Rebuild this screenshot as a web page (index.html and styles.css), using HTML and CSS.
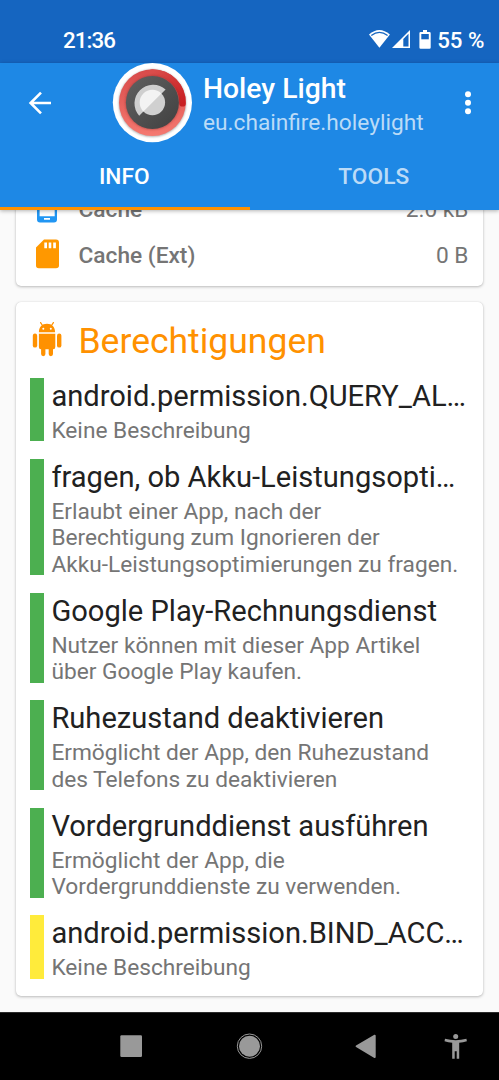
FILE: index.html
```html
<!DOCTYPE html>
<html lang="de">
<head>
<meta charset="utf-8">
<title>Holey Light</title>
<link rel="stylesheet" href="styles.css">
</head>
<body>
<div class="status">
  <span class="clock">21:36</span>
  <svg class="status-icons" width="64" height="22" viewBox="367 28 64 22">
    <path d="M368 34.6Q378.300 25.600 388.900 34.600L378.400 47.800Z" fill="#fff"/>
    <path d="M370.300 35.600Q378.400 29.300 386.600 35.600" fill="none" stroke="#1565c0" stroke-width="1.300"/>
    <path d="M391 48L409 30V48Z" fill="#fff"/>
    <path d="M402.300 38.900L407.500 33.700V46.500H402.300Z" fill="#1565c0"/>
    <path d="M422 30H426V32H428.500Q429.700 32 429.700 33.200V47.500Q429.700 48.700 428.500 48.700H419.600Q418.400 48.700 418.400 47.500V33.200Q418.400 32 419.600 32H422Z" fill="#fff"/>
    <path d="M420.300 34H427.800V39.300H420.300Z" fill="#1565c0"/>
  </svg>
  <span class="battery">55 %</span>
</div>
<header class="header">
  <div class="toolbar">
    <svg class="back" width="24" height="24" viewBox="0 0 24 24" fill="none" stroke="#fff" stroke-width="2.600"><path d="M23 12H2.500M13 1.600L2.600 12L13 22.400"/></svg>
    <svg class="logo" width="80" height="80" viewBox="0 0 80 80">
      <defs>
        <linearGradient id="ring" x1="0" y1="0" x2="0" y2="1"><stop offset="0" stop-color="#d84a4a"/><stop offset="1" stop-color="#f57970"/></linearGradient>
        <linearGradient id="arc" x1="0" y1="0" x2="1" y2="1"><stop offset="0" stop-color="#da4d4b"/><stop offset="1" stop-color="#c91f22"/></linearGradient>
        <linearGradient id="disc" x1="0" y1="0" x2="1" y2="1"><stop offset="0" stop-color="#616161"/><stop offset="1" stop-color="#404040"/></linearGradient>
        <filter id="soft" x="-20%" y="-20%" width="140%" height="140%"><feGaussianBlur stdDeviation="1"/></filter>
      </defs>
      <g transform="translate(.4 -.4)">
        <circle cx="40" cy="40" r="39.600" fill="#fff"/>
        <circle cx="40" cy="40.600" r="33.600" fill="#777" opacity=".65" filter="url(#soft)"/>
        <circle cx="40" cy="40" r="33.400" fill="url(#ring)"/>
        <path d="M40 9.900A30.100 30.100 0 0 1 70.100 40.700" fill="none" stroke="url(#arc)" stroke-width="6.600" stroke-linecap="round"/>
        <circle cx="40" cy="40" r="27" fill="#802d2d" opacity=".5" filter="url(#soft)"/>
        <circle cx="40" cy="40" r="26.500" fill="url(#disc)"/>
        <path d="M26.800 53.200A18.700 18.700 0 0 1 53.200 26.800Z" fill="#cfcfcf"/>
        <circle cx="40" cy="40" r="12.700" fill="#d0d0d0"/>
        <path d="M31 49A12.700 12.700 0 0 1 49 31Z" fill="#f3f3f3"/>
      </g>
    </svg>
    <div class="app">
      <div class="app-name">Holey Light</div>
      <div class="app-id">eu.chainfire.holeylight</div>
    </div>
    <svg class="more" width="8" height="26" viewBox="0 0 8 26" fill="#fff"><circle cx="4" cy="4.200" r="3"/><circle cx="4" cy="12.700" r="3"/><circle cx="4" cy="21.200" r="3"/></svg>
  </div>
  <nav class="tabs"><div class="tab active">INFO</div><div class="tab">TOOLS</div></nav>
</header>
<main class="content">
  <section class="card storage">
    <div class="row">
      <svg class="row-icon" width="32" height="32" viewBox="0 0 32 32"><path fill="#2196f3" fill-rule="evenodd" d="M9 0H23Q26 0 26 3V27.500Q26 30.500 23 30.500H9Q6 30.500 6 27.500V3Q6 0 9 0ZM8.600 4V24.300H23.700V4ZM13 26.100V27.700H19V26.100Z"/></svg>
      <span class="label">Cache</span><span class="value">2.0 kB</span>
    </div>
    <div class="row">
      <svg class="row-icon" width="32" height="32" viewBox="0 0 32 32"><path fill="#ff9800" fill-rule="evenodd" d="M13 1.500H25Q28 1.500 28 4.500V27.500Q28 30.300 25 30.300H7.800Q5 30.300 5 27.500V9.500ZM13.300 4.600V10.300H16V4.600ZM17.700 4.600V10.300H20.300V4.600ZM22.200 4.600V10.300H24.900V4.600Z"/></svg>
      <span class="label">Cache (Ext)</span><span class="value">0 B</span>
    </div>
  </section>
  <section class="card permissions">
    <div class="heading">
      <svg width="30" height="36" viewBox="32 321 30 36" fill="#ff9100">
        <path d="M40.600 322.600L42.500 325.500M53.400 322.600L51.500 325.500" stroke="#ff9100" stroke-width="1.200" stroke-linecap="round"/>
        <path fill-rule="evenodd" d="M38.900 332.200C38.900 327 42 323.800 47 323.800S55.100 327 55.100 332.200ZM42.300 328.800A1 1 0 1 0 44.300 328.800A1 1 0 1 0 42.300 328.800M49.800 328.800A1 1 0 1 0 51.800 328.800A1 1 0 1 0 49.800 328.800"/>
        <path d="M38.900 333.800H55.300V347Q55.300 349.200 53.200 349.200H53V354.100A2.100 2.100 0 0 1 48.700 354.100V349.200H45.400V354.100A2.100 2.100 0 0 1 41.100 354.100V349.200H40.900Q38.900 349.200 38.900 347Z"/>
        <rect x="32.800" y="333.600" width="4.400" height="14" rx="2.200"/><rect x="57" y="333.600" width="4.400" height="14" rx="2.200"/>
      </svg>
      <h1>Berechtigungen</h1>
    </div>
    <div class="list">
      <article class="perm"><h2>android.permission.QUERY_AL…</h2><p>Keine Beschreibung</p></article>
      <article class="perm"><h2>fragen, ob Akku-Leistungsopti…</h2><p>Erlaubt einer App, nach der<br>Berechtigung zum Ignorieren der<br>Akku-Leistungsoptimierungen zu fragen.</p></article>
      <article class="perm"><h2>Google Play-Rechnungsdienst</h2><p>Nutzer können mit dieser App Artikel<br>über Google Play kaufen.</p></article>
      <article class="perm"><h2>Ruhezustand deaktivieren</h2><p>Ermöglicht der App, den Ruhezustand<br>des Telefons zu deaktivieren</p></article>
      <article class="perm"><h2>Vordergrunddienst ausführen</h2><p>Ermöglicht der App, die<br>Vordergrunddienste zu verwenden.</p></article>
      <article class="perm warn"><h2>android.permission.BIND_ACC…</h2><p>Keine Beschreibung</p></article>
    </div>
  </section>
</main>
<footer class="navbar">
  <svg width="499" height="67" viewBox="0 1013 499 67" fill="#999">
    <rect x="120.300" y="1035.300" width="21.700" height="21.700" rx="1.200"/>
    <circle cx="249.500" cy="1046.200" r="10.500"/><circle cx="249.500" cy="1046.200" r="12.200" fill="none" stroke="#999" stroke-width="1"/>
    <path d="M356.500 1046.300L374.800 1035.600V1057.100Z" stroke="#999" stroke-width="1.800" stroke-linejoin="round"/>
    <circle cx="455.700" cy="1036.600" r="2.500"/>
    <path d="M445 1038.800Q455.700 1041.600 466.400 1038.800L466.900 1041.200Q463 1042.300 459.200 1042.700V1058.700H456.700V1051.200H454.700V1058.700H452.200V1042.700Q448.300 1042.300 444.500 1041.200Z"/>
  </svg>
</footer>
</body>
</html>
```
FILE: styles.css
```css
* { box-sizing: border-box; margin: 0; padding: 0; }
body {
  width: 499px;
  height: 1080px;
  display: flex;
  flex-direction: column;
  overflow: hidden;
  background: #fafafa;
  color: #757575;
  font-family: Roboto, "Liberation Sans", sans-serif;
}
svg { display: block; flex: none; }
.status {
  height: 63px;
  flex: none;
  display: flex;
  align-items: center;
  padding: 17px 14.5px 0 63px;
  background: #1565c0;
  color: #fff;
  font-weight: 500;
  font-size: 22.3px;
}
.clock { flex: 1; letter-spacing: -0.9px; }
.status-icons { margin: -3px 6px 0 0; }
.battery { margin-left: -0.5px; }
.header {
  height: 147px;
  flex: none;
  position: relative;
  z-index: 1;
  background: #1e88e5;
  color: #fff;
  box-shadow: 0 1px 4px rgba(0, 0, 0, .3);
}
.toolbar { height: 79px; display: flex; align-items: center; padding: 0 27.5px 0 27.8px; }
.logo { margin-left: 60.2px; }
.app { flex: 1; margin: 5px 0 0 11px; white-space: nowrap; }
.app-name { font-weight: 500; font-size: 28.3px; line-height: 34px; }
.app-id { font-size: 22.7px; line-height: 33px; color: #bbdbf7; }
.tabs { height: 68px; display: flex; }
.tab {
  flex: 1;
  text-align: center;
  font-weight: 500;
  font-size: 22.7px;
  line-height: 70px;
  padding-right: 1px;
  color: #bbdbf7;
}
.tab.active { color: #fff; border-bottom: 3px solid #ff9100; }
.content { flex: 1; min-height: 0; overflow: hidden; padding: 0 16px; }
.card {
  background: #fff;
  border-radius: 5px;
  box-shadow: 0 1px 3px rgba(0, 0, 0, .25), 0 0 1px rgba(0, 0, 0, .15);
}
.storage { margin-top: -24px; height: 99.5px; padding-top: .4px; }
.row { height: 46px; display: flex; align-items: center; padding: 0 14.5px; font-size: 22.7px; }
.row-icon { margin: -2px 16px 0 0; }
.label { flex: 1; font-weight: 500; }
.permissions { margin-top: 16px; height: 694.5px; padding: 0 14px; }
.heading { height: 76.3px; display: flex; align-items: center; gap: 17px; padding-left: 2px; }
.heading svg { margin-top: -1px; }
.heading h1 { margin: 2.5px 0 0 -0.5px; font-weight: 400; font-size: 35.5px; color: #ff9100; }
.list { display: grid; gap: 17.5px; }
.perm { border-left: 14.500px solid #4caf50; padding-left: 7.4px; white-space: nowrap; }
.perm.warn { border-left-color: #ffeb3b; }
.perm h2 { height: 39.9px; font-weight: 400; font-size: 29.1px; line-height: 37.2px; color: #212121; }
.perm p { margin-bottom: -2.7px; font-size: 22.7px; line-height: 26.4px; }
.navbar { height: 68px; flex: none; background: #000; border-top: 1px solid #2b2b2b; }
```
